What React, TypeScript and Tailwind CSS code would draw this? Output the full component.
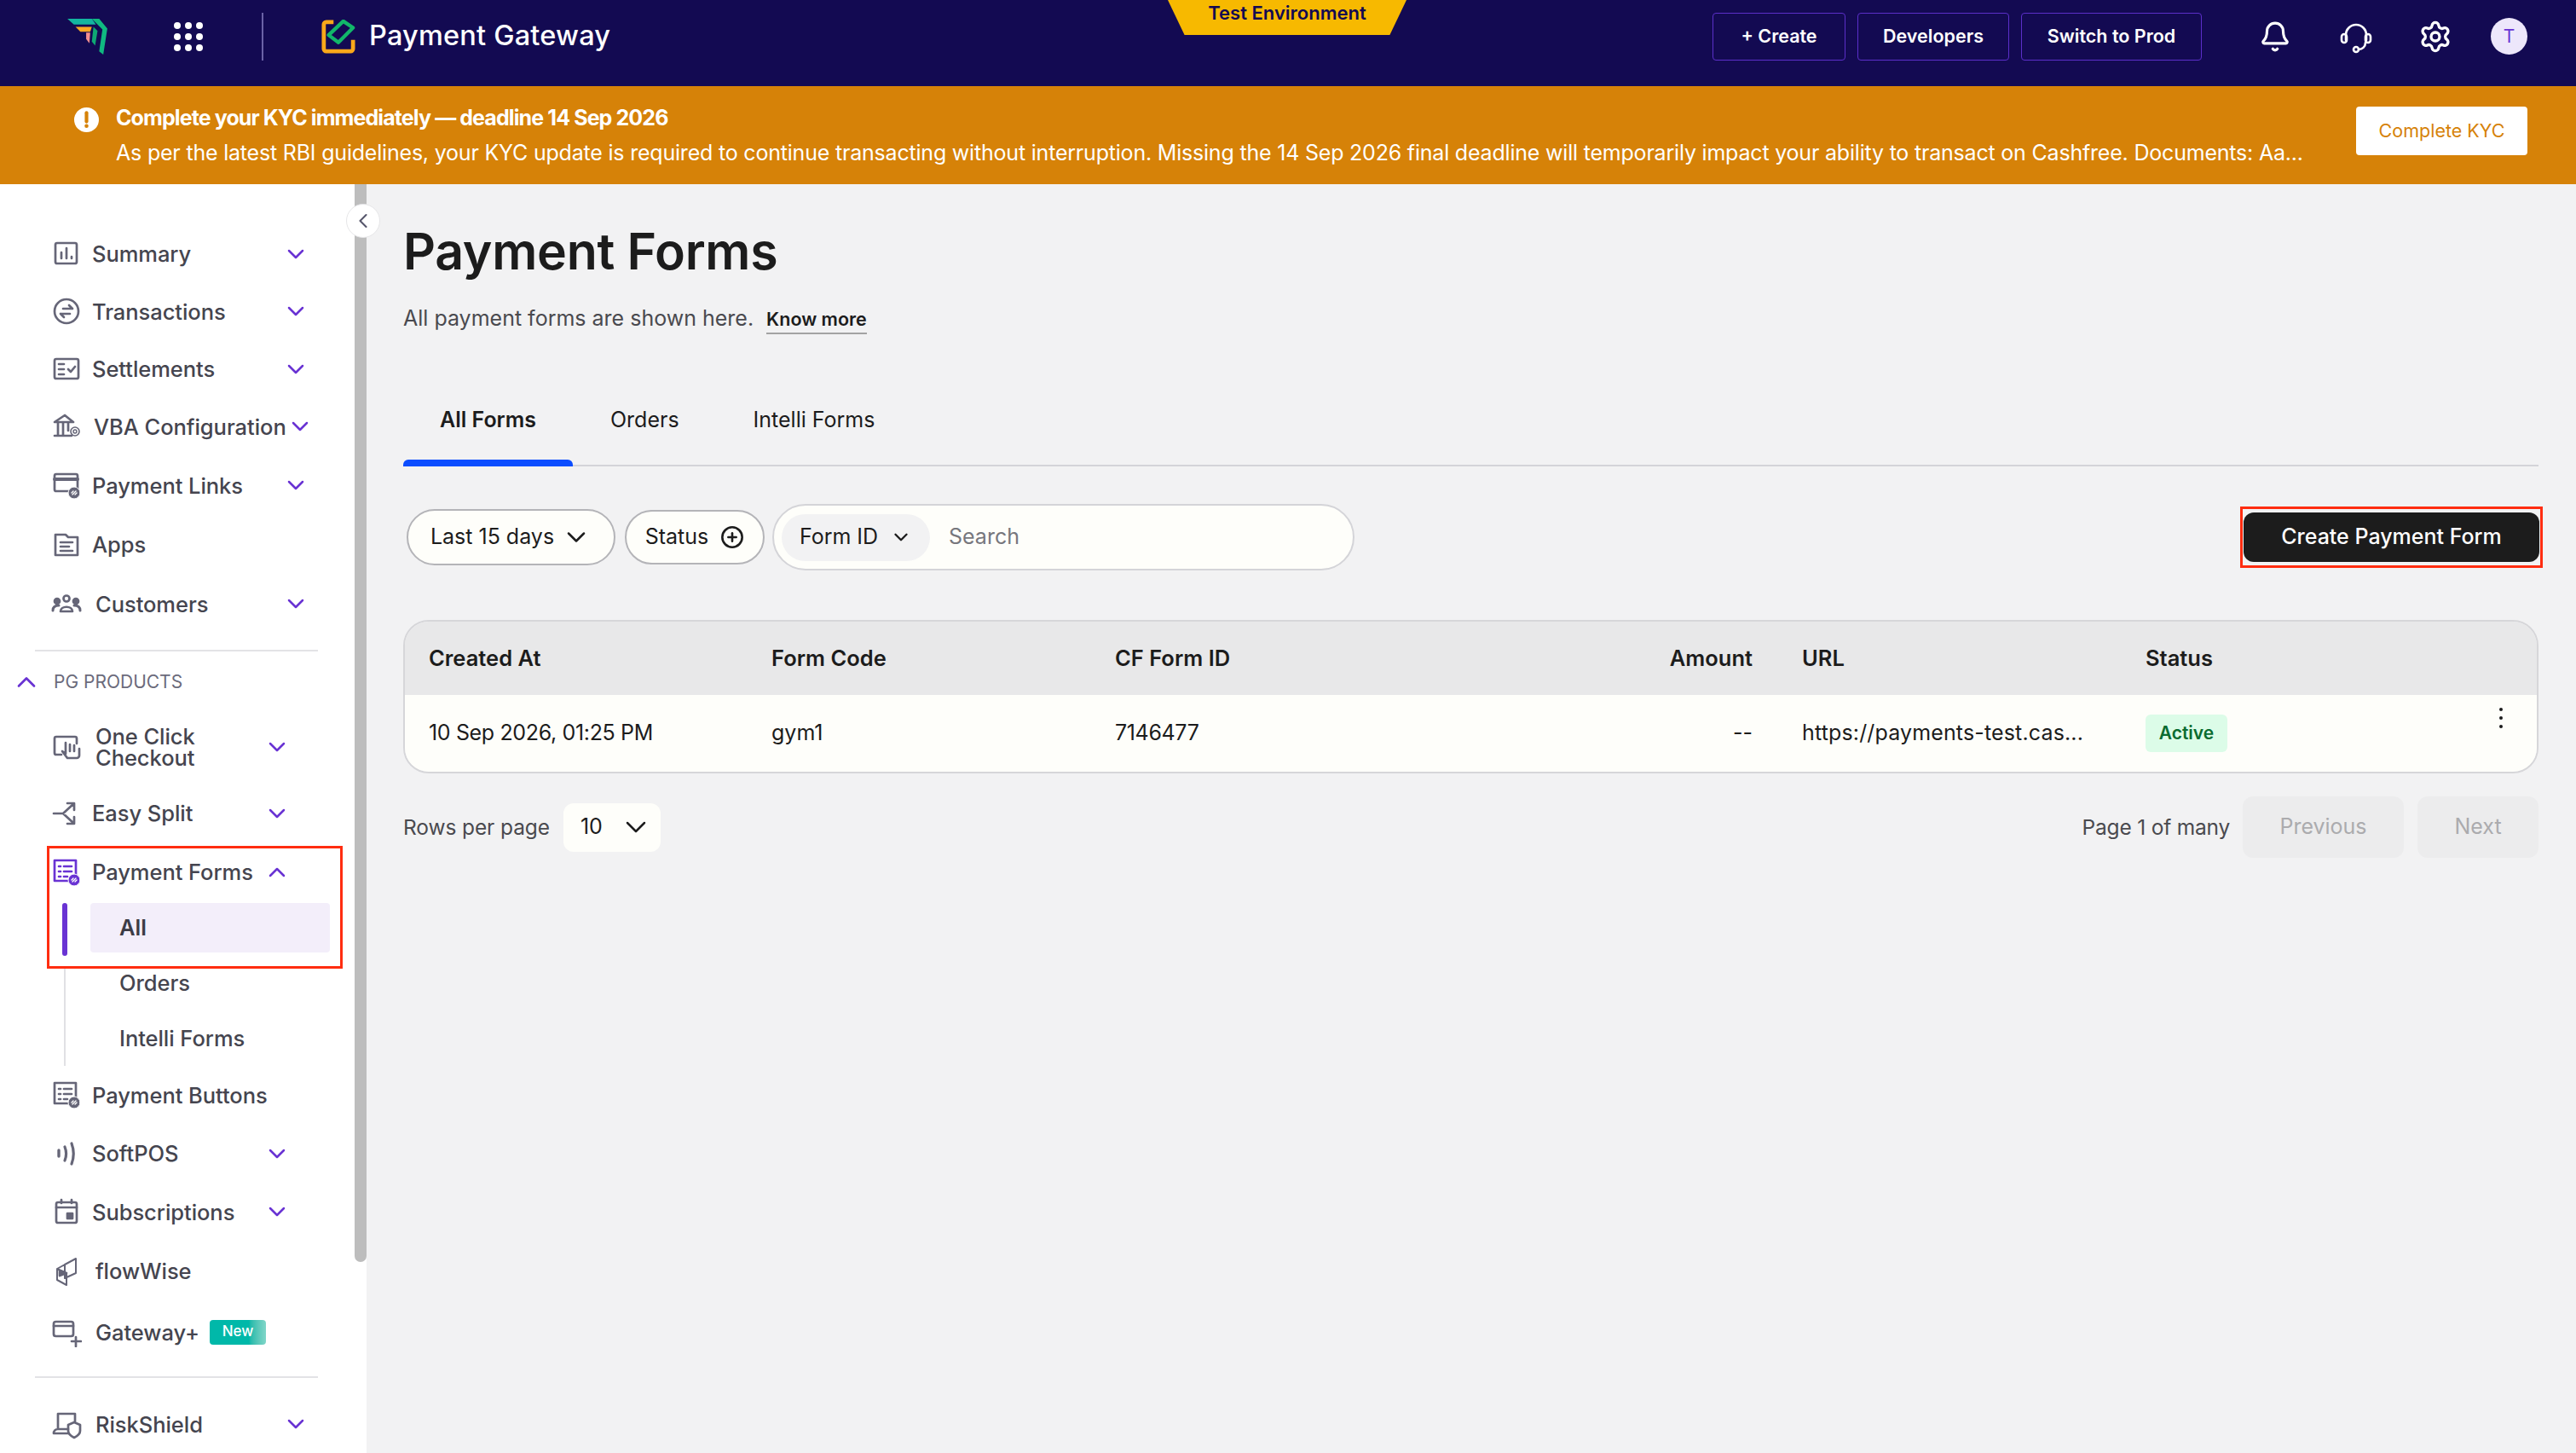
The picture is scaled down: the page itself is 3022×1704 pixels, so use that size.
import { Bell, ChevronDown, ChevronLeft, ChevronUp, CirclePlus, Settings } from "lucide-react";
import type { ReactNode } from "react";

const font = "font-['Inter','Liberation_Sans',sans-serif]";

function Ico({ children, className = "text-[#666678]" }: { children: ReactNode; className?: string }) {
  return (
    <svg viewBox="0 0 36 36" fill="none" stroke="currentColor" strokeWidth="2.7" strokeLinecap="round" strokeLinejoin="round" className={`h-9 w-9 shrink-0 ${className}`}>
      {children}
    </svg>
  );
}

const LinkBadge = ({ fill = "#666678" }: { fill?: string }) => (
  <>
    <circle cx="27" cy="27" r="7" fill={fill} stroke="white" strokeWidth="1" />
    <path d="M25 29l4-4M24 27l2-2M28 29l2-2" stroke="white" strokeWidth="1.4" />
  </>
);

const icons: Record<string, ReactNode> = {
  summary: (
    <Ico>
      <rect x="5" y="5" width="25" height="24" rx="2" />
      <path d="M12 16v7M18 11v12M24 21v2" />
    </Ico>
  ),
  transactions: (
    <Ico>
      <circle cx="18" cy="18" r="14" />
      <path d="M14 15h11M21 11l4 4M22 21H11M15 25l-4-4" />
    </Ico>
  ),
  settlements: (
    <Ico>
      <rect x="4" y="6" width="28" height="23" rx="2" />
      <path d="M9 12h6M9 18h6M9 24h6M20 18l3 3 5-6" />
    </Ico>
  ),
  vba: (
    <Ico>
      <path d="M4 13L16 5l10 8H4zM8 14v14M14 14v14M20 14v9M4 29h20" />
      <circle cx="28" cy="24" r="5" strokeWidth="1.6" />
      <circle cx="28" cy="24" r="2" strokeWidth="1.4" />
    </Ico>
  ),
  links: (
    <Ico>
      <rect x="4" y="5" width="27" height="20" rx="2" />
      <path d="M4 11h27" strokeWidth="4" />
      <LinkBadge />
    </Ico>
  ),
  apps: (
    <Ico>
      <path d="M5 6h12l3 3h11v21H5z" />
      <path d="M11 15h14M11 20h10M11 25h14" />
    </Ico>
  ),
  customers: (
    <Ico>
      <circle cx="18" cy="12" r="3.5" />
      <path d="M11 27c0-7 14-7 14 0z" />
      <circle cx="7" cy="15" r="3" fill="currentColor" />
      <circle cx="29" cy="15" r="3" fill="currentColor" />
      <path d="M2 26c0-6 5-6 7-6M34 26c0-6-5-6-7-6" strokeWidth="3" />
    </Ico>
  ),
  oneclick: (
    <Ico>
      <path d="M12 27H6a2 2 0 0 1-2-2V8a2 2 0 0 1 2-2h22a2 2 0 0 1 2 2v6" />
      <path d="M17 13v13l-4-3 6 8h11a3 3 0 0 0 3-3v-8M22 15v8M27 16v7" />
    </Ico>
  ),
  split: (
    <Ico>
      <path d="M3 18h11l12-11M14 18l12 11M19 6h8v8M27 22v8h-8" />
    </Ico>
  ),
  forms: (
    <Ico className="text-[#6933d3]">
      <rect x="4" y="4" width="25" height="24" />
      <path d="M9 11h2M15 11h9M9 17h2M15 17h9M9 23h2M15 23h4" />
      <LinkBadge fill="#6933d3" />
    </Ico>
  ),
  buttons: (
    <Ico>
      <rect x="4" y="4" width="25" height="24" />
      <path d="M9 11h2M15 11h9M9 17h2M15 17h9M9 23h2M15 23h4" />
      <LinkBadge />
    </Ico>
  ),
  softpos: (
    <Ico>
      <path d="M9 14v7" strokeWidth="3.4" />
      <path d="M16 10c2 5 2 11 0 16M24 6c3 8 3 16 0 24" strokeWidth="3.2" />
    </Ico>
  ),
  subs: (
    <Ico>
      <rect x="6" y="7" width="24" height="24" rx="2" />
      <path d="M6 13h24M12 4v4M24 4v4" />
      <rect x="19" y="20" width="6" height="6" fill="currentColor" />
    </Ico>
  ),
  flow: (
    <Ico>
      <path d="M16 10l13-7v17l-13 6zM7 15l9-5M7 15v13l11 6V20l-11-5z" strokeWidth="2" />
      <path d="M10 17l8 3-8 3z" fill="currentColor" />
    </Ico>
  ),
  gateway: (
    <Ico>
      <rect x="3" y="6" width="23" height="17" rx="2.5" />
      <path d="M3 11h23M29 24v11M24 29h11" />
    </Ico>
  ),
  risk: (
    <Ico>
      <path d="M8 24V6h20v9M3 29h17M3 29c0-3 2-5 5-5h12" />
      <path d="M27 16l7 3v7c0 4-3 6-7 8-4-2-7-4-7-8v-7z" />
    </Ico>
  ),
};

function NavRow({
  icon,
  label,
  chevron,
  gap = "ml-[12px]",
  inner,
  height = "h-[68px]",
  badge,
}: {
  icon: string;
  label: ReactNode;
  chevron?: "down" | "up";
  gap?: string;
  inner?: boolean;
  height?: string;
  badge?: boolean;
}) {
  return (
    <div className={`flex items-center ${height} ${inner ? "pr-[75px]" : "pr-[53px]"} pl-[60px]`}>
      {icons[icon]}
      <span className={`${gap} whitespace-nowrap text-[25.5px] leading-[25px] font-medium tracking-[-0.05px] text-[#45454f]`}>{label}</span>
      {badge && (
        <span className="ml-[12px] flex h-[29px] w-[66px] items-center justify-center rounded-[4px] bg-gradient-to-r from-[#00b8a9] from-70% to-[#7fd6c8] text-[17px] font-medium text-white">
          New
        </span>
      )}
      {chevron === "down" && <ChevronDown className="ml-auto h-[32px] w-[32px] shrink-0 text-[#6933d3]" strokeWidth={1.9} />}
      {chevron === "up" && <ChevronUp className="ml-auto h-[32px] w-[32px] shrink-0 text-[#6933d3]" strokeWidth={1.9} />}
    </div>
  );
}

function Sidebar() {
  return (
    <aside className="relative flex w-[416px] shrink-0 flex-col bg-white pt-[48px]">
      <NavRow icon="summary" label="Summary" chevron="down" />
      <NavRow icon="transactions" label="Transactions" chevron="down" />
      <NavRow icon="settlements" label="Settlements" chevron="down" />
      <NavRow icon="vba" label="VBA Configuration" chevron="down" gap="ml-[14px]" />
      <NavRow icon="links" label="Payment Links" chevron="down" height="h-[70px]" />
      <NavRow icon="apps" label="Apps" height="h-[70px]" />
      <NavRow icon="customers" label="Customers" chevron="down" gap="ml-[16px]" height="h-[70px]" />
      <div className="mx-[41px] mt-[19px] h-[2px] w-[332px] bg-[#e3e3e6]" />
      <div className="mt-[25px] flex h-[22px] items-center">
        <ChevronUp className="ml-[13px] h-[36px] w-[36px] shrink-0 text-[#6933d3]" strokeWidth={1.8} />
        <span className="ml-[14px] text-[21px] leading-[22px] text-[#6b6b7b]">PG PRODUCTS</span>
      </div>
      <div className="mt-[27px]">
        <NavRow icon="oneclick" label={<span className="block">One Click<br />Checkout</span>} chevron="down" gap="ml-[16px]" inner height="h-[76px]" />
        <div className="mt-[6px]">
          <NavRow icon="split" label="Easy Split" chevron="down" inner height="h-[68px]" />
        </div>
      </div>
      <div className="ml-[55px] mt-[4px] h-[144px] w-[347px] shrink-0 border-[3px] border-[#ff2d10]">
        <div className="-ml-[58px] -mt-[3px] flex h-[68px] w-[416px] items-start">
          <NavRow icon="forms" label="Payment Forms" chevron="up" inner height="h-[62px] w-full" />
        </div>
        <div className="-mt-[1px] flex h-[62px] pl-[15px]">
          <div className="h-[62px] w-[6px] rounded-full bg-[#6933d3]" />
          <div className="ml-[27px] flex h-[58px] w-[281px] items-center rounded-[4px] bg-[#f3eefa] pl-[34px] text-[25.5px] font-semibold text-[#3c3c46]">All</div>
        </div>
      </div>
      <div className="ml-[75px] flex h-[115px] flex-col border-l-2 border-[#e1e1e4] pt-[4px] pl-[63px] text-[25.5px] font-medium tracking-[-0.05px] text-[#45454f]">
        <div className="flex h-[32px] items-end">Orders</div>
        <div className="mt-[30px] flex h-[32px] items-center">Intelli Forms</div>
      </div>
      <NavRow icon="buttons" label="Payment Buttons" height="h-[68px]" />
      <NavRow icon="softpos" label="SoftPOS" chevron="down" inner height="h-[70px]" />
      <NavRow icon="subs" label="Subscriptions" chevron="down" inner height="h-[68px]" />
      <NavRow icon="flow" label="flowWise" gap="ml-[16px]" height="h-[72px]" />
      <NavRow icon="gateway" label="Gateway+" gap="ml-[16px]" badge height="h-[72px]" />
      <div className="mx-[41px] mt-[16px] h-[2px] w-[332px] shrink-0 bg-[#e3e3e6]" />
      <div className="mt-[20px]">
        <NavRow icon="risk" label="RiskShield" chevron="down" gap="ml-[16px]" />
      </div>
      <button className="absolute top-[23px] -right-[30px] z-10 flex h-[40px] w-[40px] items-center justify-center rounded-full border border-[#e6e6e8] bg-white text-[#55556a]">
        <ChevronLeft className="h-[28px] w-[28px]" strokeWidth={1.8} />
      </button>
    </aside>
  );
}

function TopBar() {
  return (
    <header className="relative flex h-[101px] shrink-0 items-center bg-[#130a52] pb-[16px]">
      <svg viewBox="0 0 50 46" className="ml-[78px] h-[44px] w-[48px]">
        <polygon points="1,1 31,1 36,8 9,8" fill="#13b5a0" />
        <polygon points="31,1 40,1 50,13 45,45 40,41 44,14" fill="#10b981" />
        <polygon points="33,11 38,16 35,34 31,29" fill="#0fa873" />
        <polygon points="11,11 31,11 29,17 17,17" fill="#f9a825" />
        <polygon points="24,18 29,18 28,31 24,26" fill="#f58f8f" />
      </svg>
      <div className="ml-[78px] grid grid-cols-3 gap-x-[5px] gap-y-[5px]">
        {Array.from({ length: 9 }).map((_, i) => (
          <span key={i} className="h-[8px] w-[8px] rounded-full bg-white" />
        ))}
      </div>
      <div className="ml-[69px] h-[56px] w-[2px] bg-[#6a62a6]" />
      <svg viewBox="0 0 42 42" className="ml-[68px] h-[40px] w-[40px]" fill="none">
        <path d="M15 3H6a3 3 0 0 0-3 3v30a3 3 0 0 0 3 3h30a3 3 0 0 0 3-3V25" stroke="#f9a81a" strokeWidth="5" />
        <path d="M27 2l12 8-18 18-12-9z" stroke="#12b76a" strokeWidth="4.5" strokeLinejoin="round" />
      </svg>
      <span className="ml-[16px] text-[32.5px] font-medium tracking-[0.2px] text-white">Payment Gateway</span>
      <div className="absolute top-0 left-[1370px] h-[41px] w-[280px] bg-[#f7b900] [clip-path:polygon(0_0,100%_0,93%_100%,7%_100%)]">
        <div className="text-center text-[22px] leading-[30px] font-semibold text-[#130a52]">Test Environment</div>
      </div>
      <div className="ml-auto flex items-center pr-[57px]">
        <div className="flex items-center gap-[14px]">
          <button className="flex h-[56px] w-[156px] items-center justify-center rounded-[4px] border border-[#5b2fc9] text-[21.5px] font-semibold text-white">+ Create</button>
          <button className="flex h-[56px] w-[178px] items-center justify-center rounded-[4px] border border-[#5b2fc9] text-[21.5px] font-semibold text-white">Developers</button>
          <button className="flex h-[56px] w-[212px] items-center justify-center rounded-[4px] border border-[#5b2fc9] text-[21.5px] font-semibold text-white">Switch to Prod</button>
        </div>
        <Bell className="ml-[67px] h-[38px] w-[38px] text-white" strokeWidth={2} />
        <svg viewBox="0 0 40 40" fill="none" stroke="white" strokeWidth="2.6" strokeLinecap="round" className="ml-[56px] h-[40px] w-[40px]">
          <path d="M8 24v-6a12 12 0 0 1 24 0v6" />
          <rect x="3" y="17" width="6" height="10" rx="3" />
          <rect x="31" y="17" width="6" height="10" rx="3" />
          <path d="M31 27c0 5-4 8-8 8" />
          <circle cx="20" cy="35" r="3" />
        </svg>
        <Settings className="ml-[53px] h-[40px] w-[40px] text-white" strokeWidth={2} />
        <div className="ml-[45px] flex h-[43px] w-[43px] items-center justify-center rounded-full bg-[#ede7fb] text-[21px] text-[#6933d3]">T</div>
      </div>
    </header>
  );
}

function KycBanner() {
  return (
    <div className="flex h-[115px] shrink-0 items-center bg-[#d68208] pr-[57px] pl-[87px]">
      <svg viewBox="0 0 28 28" className="mb-[36px] h-[29px] w-[29px] shrink-0">
        <circle cx="14" cy="14" r="14" fill="white" />
        <path d="M14 6v10" stroke="#d68208" strokeWidth="4" strokeLinecap="round" />
        <circle cx="14" cy="21" r="2.2" fill="#d68208" />
      </svg>
      <div className="ml-[20px] flex min-w-0 flex-col gap-[12px] text-white">
        <div className="text-[25px] leading-[29px] font-bold tracking-[-0.9px]">Complete your KYC immediately — deadline 14 Sep 2026</div>
        <div className="w-[2566px] truncate text-[25px] leading-[29px] tracking-[-0.2px]">
          As per the latest RBI guidelines, your KYC update is required to continue transacting without interruption. Missing the 14 Sep 2026 final deadline will temporarily impact your ability to transact on Cashfree. Documents: Aa...
        </div>
      </div>
      <button className="mb-[10px] ml-auto flex h-[57px] w-[201px] shrink-0 items-center justify-center rounded-[4px] bg-white text-[21.5px] text-[#d68208]">Complete KYC</button>
    </div>
  );
}

function Filters() {
  return (
    <div className="mt-[44px] flex items-center">
      <button className="ml-[4px] flex h-[66px] w-[245px] items-center justify-center gap-[8px] rounded-[33px] border-2 border-[#b4b4b8] bg-[#fefefa] text-[25px] text-[#1c1c1c]">
        Last 15 days <ChevronDown className="h-[36px] w-[36px]" strokeWidth={1.7} />
      </button>
      <button className="ml-[11px] flex h-[64px] w-[164px] items-center justify-center gap-[14px] rounded-[32px] border-2 border-[#b4b4b8] bg-[#fefefa] text-[25px] text-[#1c1c1c]">
        Status <CirclePlus className="h-[28px] w-[28px]" strokeWidth={2.2} />
      </button>
      <div className="ml-[9px] flex h-[78px] w-[683px] items-center rounded-[39px] border-2 border-[#d4d4d8] bg-[#fefefa] pl-[9px]">
        <div className="flex h-[55px] w-[174px] items-center justify-center gap-[14px] rounded-[28px] bg-[#f2f2f3] text-[25px] text-[#1c1c1c]">
          Form ID <ChevronDown className="h-[26px] w-[26px]" strokeWidth={2.2} />
        </div>
        <span className="ml-[22px] text-[25px] text-[#77777d]">Search</span>
      </div>
      <div className="-mr-[5px] ml-auto border-[3px] border-[#ff2d10] px-[1px] py-[4px]">
        <button className="flex h-[58px] w-[347px] items-center justify-center rounded-[12px] bg-[#1c1c1c] text-[25px] font-medium text-white">Create Payment Form</button>
      </div>
    </div>
  );
}

function FormsTable() {
  const cols = "grid grid-cols-[402px_403px_600px_148px_461px_1fr] items-center pl-[28px]";
  return (
    <div className="mt-[58px] overflow-hidden rounded-[30px] border-2 border-[#d6d6d9]">
      <div className={`${cols} h-[86px] bg-[#e8e8e9] text-[25.5px] font-semibold text-[#1c1c1c]`}>
        <div>Created At</div>
        <div>Form Code</div>
        <div>CF Form ID</div>
        <div className="text-right">Amount</div>
        <div className="pl-[58px]">URL</div>
        <div>Status</div>
      </div>
      <div className={`${cols} relative h-[90px] bg-[#fefefa] text-[25px] text-[#1c1c1c]`}>
        <div className="tracking-[-0.35px]">10 Sep 2026, 01:25 PM</div>
        <div>gym1</div>
        <div className="tracking-[-0.35px]">7146477</div>
        <div className="text-right">--</div>
        <div className="truncate pl-[58px] tracking-[0.15px]">https://payments-test.cas...</div>
        <div>
          <span className="flex h-[44px] w-[96px] items-center justify-center rounded-[6px] bg-[#dcfce8] text-[21px] font-semibold text-[#0a6b30]">Active</span>
        </div>
        <div className="absolute top-[15px] right-[40px] flex flex-col gap-[6px]">
          <span className="h-[4px] w-[4px] rounded-full bg-[#1c1c1c]" />
          <span className="h-[4px] w-[4px] rounded-full bg-[#1c1c1c]" />
          <span className="h-[4px] w-[4px] rounded-full bg-[#1c1c1c]" />
        </div>
      </div>
    </div>
  );
}

export default function App() {
  return (
    <div className={`flex h-screen w-full flex-col overflow-hidden bg-[#f2f2f3] ${font}`}>
      <TopBar />
      <KycBanner />
      <div className="flex min-h-0 flex-1">
        <Sidebar />
        <div className="w-[14px] shrink-0 bg-white">
          <div className="h-[1264px] rounded-b-[8px] bg-[#bdbdbd]" />
        </div>
        <main className="min-w-0 flex-1 pr-[44px] pl-[43px]">
          <h1 className="mt-[47px] text-[59px] leading-[64px] font-semibold tracking-[-0.3px] text-[#1c1c1c]">Payment Forms</h1>
          <p className="mt-[30px] flex items-baseline text-[25px] leading-[32px] text-[#4a4a4f]">
            All payment forms are shown here.
            <a className="ml-[15px] border-b-2 border-[#a3a3a3] text-[21.5px] font-semibold text-[#1c1c1c]">Know more</a>
          </p>
          <div className="mt-[67px] flex h-[88px] border-b-2 border-[#d4d4d8]">
            <div className="relative flex w-[199px] items-start justify-center pt-[15px] text-[25px] font-semibold text-[#1c1c1c]">
              All Forms
              <span className="absolute right-0 -bottom-[2px] left-0 h-[8px] rounded-t-[6px] bg-[#0b4dff]" />
            </div>
            <div className="ml-[44px] pt-[15px] text-[25px] text-[#1c1c1c]">Orders</div>
            <div className="ml-[87px] pt-[15px] text-[25px] text-[#1c1c1c]">Intelli Forms</div>
          </div>
          <Filters />
          <FormsTable />
          <div className="mt-[27px] flex items-center">
            <span className="text-[24.5px] tracking-[-0.1px] text-[#4a4a4f]">Rows per page</span>
            <div className="ml-[16px] flex h-[57px] w-[114px] items-center justify-between rounded-[12px] bg-[#fefefa] pr-[9px] pl-[20px] text-[25px] text-[#1c1c1c]">
              10 <ChevronDown className="h-[40px] w-[40px]" strokeWidth={1.5} />
            </div>
            <span className="ml-auto text-[24.5px] tracking-[-0.2px] text-[#4a4a4f]">Page 1 of many</span>
            <button className="ml-[15px] h-[72px] w-[189px] rounded-[12px] bg-[#ececed] text-[25px] text-[#ababae]">Previous</button>
            <button className="ml-[16px] h-[72px] w-[142px] rounded-[12px] bg-[#ececed] text-[25px] text-[#ababae]">Next</button>
          </div>
        </main>
      </div>
    </div>
  );
}
